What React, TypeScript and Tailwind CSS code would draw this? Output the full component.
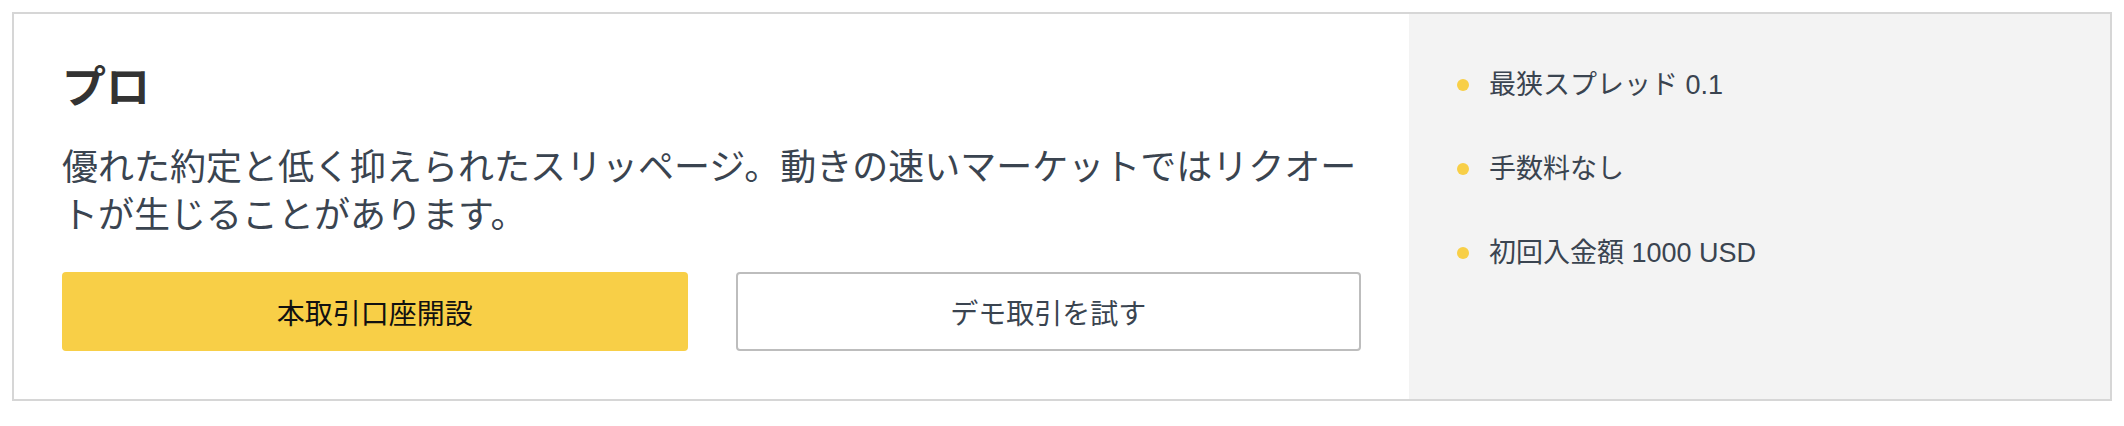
const features = ["最狭スプレッド 0.1", "手数料なし", "初回入金額 1000 USD"];

function PlanCard() {
  return (
    <div className="grid grid-cols-[1395px_1fr] border-2 border-[#d6d6d6] bg-white">
      <div className="p-12">
        <h2 className="text-[44px] leading-[44px] font-bold text-[#333333]">
          プロ
        </h2>
        <p className="mt-[34px] text-[36px] leading-[48px] text-[#3a4450]">
          優れた約定と低く抑えられたスリッページ。動きの速いマーケットではリクオートが生じることがあります。
        </p>
        <div className="mt-9 grid grid-cols-2 gap-12">
          <button className="h-[79px] rounded bg-[#f8cf47] text-[28px] text-[#111111]">
            本取引口座開設
          </button>
          <button className="h-[79px] rounded border-2 border-[#bdbdbd] bg-white text-[28px] text-[#3a4450]">
            デモ取引を試す
          </button>
        </div>
      </div>
      <div className="bg-[#f3f3f3] pl-12 pt-[53px]">
        <ul className="flex flex-col gap-12">
          {features.map((item) => (
            <li
              key={item}
              className="flex items-center gap-5 text-[27px] leading-9 text-[#3a4450] font-['Liberation_Sans','Noto_Sans_CJK_JP',sans-serif]"
            >
              <span className="h-3 w-3 shrink-0 rounded-full bg-[#f8cf47]" />
              {item}
            </li>
          ))}
        </ul>
      </div>
    </div>
  );
}

export default function App() {
  return (
    <div
      className="min-h-screen bg-white p-3"
      style={{ fontFamily: '"Noto Sans CJK JP", "Noto Sans", sans-serif' }}
    >
      <PlanCard />
    </div>
  );
}
